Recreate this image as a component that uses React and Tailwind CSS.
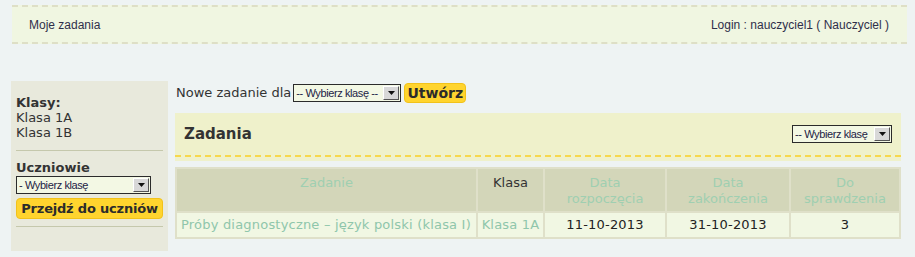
import React from "react";

const verdana = { fontFamily: '"DejaVu Sans", Verdana, sans-serif' };

// Old-style select box with a bevelled arrow button
function FakeSelect({ label, className = "" }) {
  return (
    <div
      className={`flex items-stretch border border-[#2b2b2b] bg-[#f3f8e4] h-[18px] ${className}`}
    >
      <span
        className="flex-1 pl-[2px] text-[11px] leading-[16px] tracking-[-0.4px] text-[#222244] whitespace-nowrap overflow-hidden"
        style={{ fontFamily: '"Liberation Sans", Arial, sans-serif' }}
      >
        {label}
      </span>
      <span className="w-[16px] m-[1px] flex items-center justify-center bg-[#d8d8d8] border border-t-white border-l-white border-r-[#555] border-b-[#555]">
        <svg width="7" height="4" viewBox="0 0 7 4">
          <path d="M0 0h7L3.5 4z" fill="#111" />
        </svg>
      </span>
    </div>
  );
}

function Header() {
  return (
    <div
      className="ml-[12px] mt-[5px] w-[895px] h-[39px] bg-[#f0f6e1] border-y-2 border-dashed border-[#dedfc6] flex items-center justify-between pl-[17px] pr-[18px] text-[12px] text-[#2f2f4a]"
      style={{ fontFamily: '"Liberation Sans", Arial, sans-serif' }}
    >
      <span>Moje zadania</span>
      <span>Login : nauczyciel1 ( Nauczyciel )</span>
    </div>
  );
}

function Sidebar() {
  return (
    <div className="w-[157px] h-[170px] bg-[#e8e9dc] px-[5px] pt-[14px] text-[13px] leading-[15px] text-[#333]">
      <div className="font-bold">Klasy:</div>
      <div>Klasa 1A</div>
      <div>Klasa 1B</div>
      <div className="h-px bg-[#c5c8ac] mt-[10px] mb-[9px]" />
      <div className="font-bold">Uczniowie</div>
      <FakeSelect label="- Wybierz klasę" className="w-[135px] mt-[1px]" />
      <button className="mt-[4px] w-[147px] h-[21px] bg-[#ffd42e] border border-[#f2c21a] rounded-[4px] text-[13px] tracking-[-0.2px] whitespace-nowrap font-bold text-[#2b2b2b] leading-[18px]">
        Przejdź do uczniów
      </button>
      <div className="h-px bg-[#c5c8ac] mt-[7px]" />
    </div>
  );
}

const headCell = "border-2 border-[#dfe0c9] align-top pt-[6px] pb-[3px] px-[4px] font-normal";
const bodyCell = "border-2 border-[#dfe0c9] tracking-[0.2px]";

function Main() {
  return (
    <div className="ml-[7px] w-[726px] pt-[2px]">
      <div className="flex items-center h-[20px] text-[13px] text-[#333]">
        <span className="pl-[1px] mr-[2px]">Nowe zadanie dla</span>
        <FakeSelect label="-- Wybierz klasę --" className="w-[108px]" />
        <button className="ml-[3px] w-[62px] h-[20px] bg-[#ffd42e] border border-[#f2c21a] rounded-[4px] text-[14px] font-bold text-[#2b2b2b] leading-[18px]">
          Utwórz
        </button>
      </div>
      <div className="mt-[10px] h-[44px] bg-[#eff1cb] border-b-2 border-dashed border-[#f7d84d] flex items-center justify-between pl-[9px] pr-[9px]">
        <span className="text-[15px] font-bold text-[#333]">Zadania</span>
        <FakeSelect label="-- Wybierz klasę" className="w-[100px]" />
      </div>
      <div className="h-[4px] bg-[#eff1cb]" />
      <table className="mt-[6px] w-full border-collapse border-2 border-[#dfe0c9] text-[13px] leading-[16px] text-center">
        <thead>
          <tr className="bg-[#d3d6b9] h-[44px] text-[#9fcfb1]">
            <th className={`${headCell} w-[301px]`}>Zadanie</th>
            <th className={`${headCell} w-[67px] text-[#333]`}>Klasa</th>
            <th className={`${headCell} w-[122px]`}>
              Data
              <br />
              rozpoczęcia
            </th>
            <th className={`${headCell} w-[124px]`}>
              Data
              <br />
              zakończenia
            </th>
            <th className={headCell}>
              Do
              <br />
              sprawdzenia
            </th>
          </tr>
        </thead>
        <tbody>
          <tr className="bg-[#f1f7e3] h-[26px]">
            <td className={`${bodyCell} px-[4px] text-left text-[#8fc6ab] whitespace-nowrap`}>
              Próby diagnostyczne – język polski (klasa I)
            </td>
            <td className={`${bodyCell} text-[#8fc6ab] whitespace-nowrap`}>Klasa 1A</td>
            <td className={`${bodyCell} text-[#222]`}>11-10-2013</td>
            <td className={`${bodyCell} text-[#222]`}>31-10-2013</td>
            <td className={`${bodyCell} text-[#222]`}>3</td>
          </tr>
        </tbody>
      </table>
    </div>
  );
}

export default function App() {
  return (
    <div className="w-[915px] h-[257px] bg-[#eef3f3] overflow-hidden" style={verdana}>
      <Header />
      <div className="flex mt-[37px] ml-[11px]">
        <Sidebar />
        <Main />
      </div>
    </div>
  );
}
